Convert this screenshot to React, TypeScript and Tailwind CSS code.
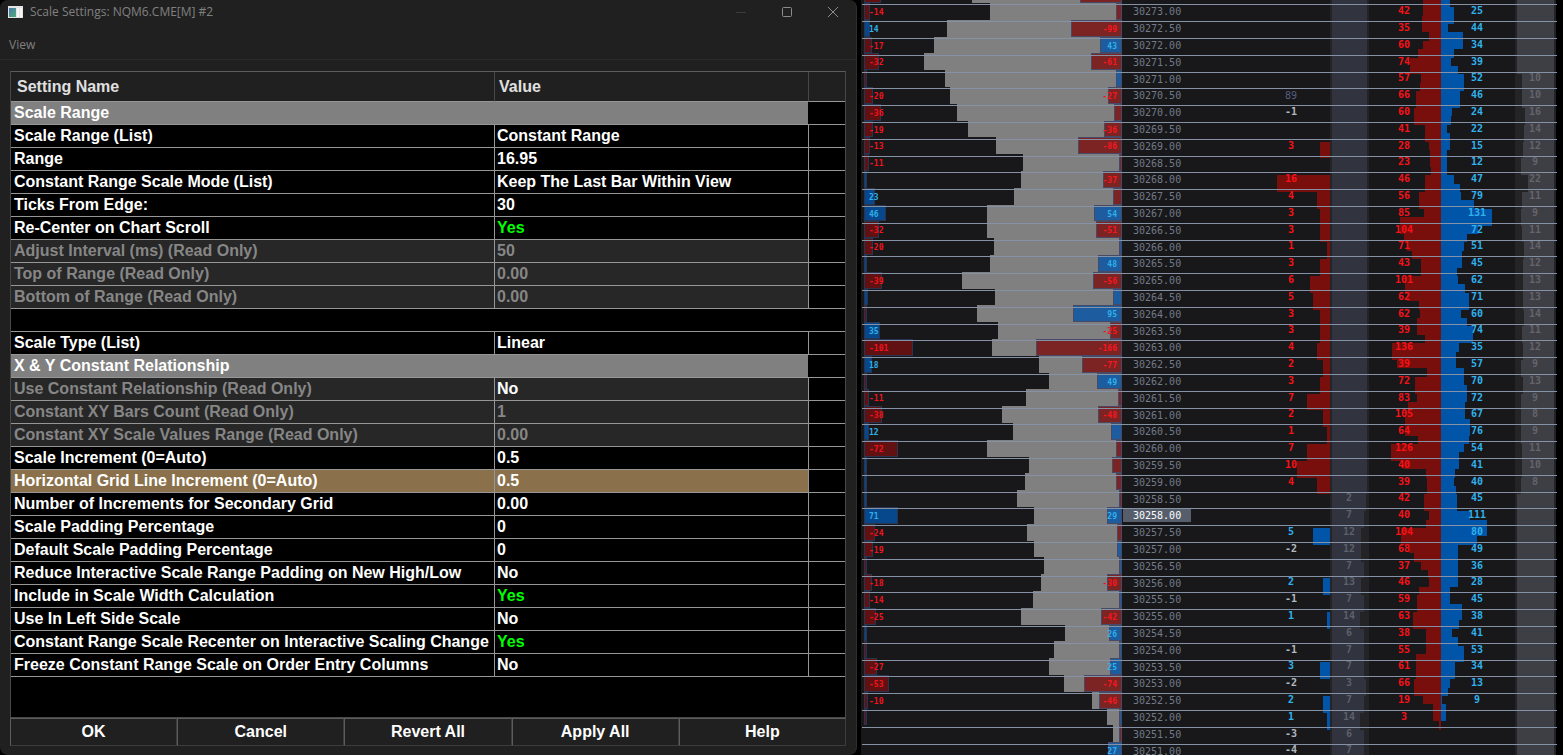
import { Fragment } from "react";

type Setting = {
  name: string;
  value?: string;
  kind?: "group" | "readonly" | "blank" | "selected";
  bright?: boolean;
};

const SETTINGS: Setting[] = [
  { name: "Scale Range", kind: "group" },
  { name: "Scale Range (List)", value: "Constant Range" },
  { name: "Range", value: "16.95" },
  { name: "Constant Range Scale Mode (List)", value: "Keep The Last Bar Within View" },
  { name: "Ticks From Edge:", value: "30" },
  { name: "Re-Center on Chart Scroll", value: "Yes" },
  { name: "Adjust Interval (ms) (Read Only)", value: "50", kind: "readonly" },
  { name: "Top of Range (Read Only)", value: "0.00", kind: "readonly" },
  { name: "Bottom of Range (Read Only)", value: "0.00", kind: "readonly" },
  { name: "", kind: "blank" },
  { name: "Scale Type (List)", value: "Linear" },
  { name: "X & Y Constant Relationship", kind: "group" },
  { name: "Use Constant Relationship (Read Only)", value: "No", kind: "readonly", bright: true },
  { name: "Constant XY Bars Count (Read Only)", value: "1", kind: "readonly" },
  { name: "Constant XY Scale Values Range (Read Only)", value: "0.00", kind: "readonly" },
  { name: "Scale Increment (0=Auto)", value: "0.5" },
  { name: "Horizontal Grid Line Increment (0=Auto)", value: "0.5", kind: "selected" },
  { name: "Number of Increments for Secondary Grid", value: "0.00" },
  { name: "Scale Padding Percentage", value: "0" },
  { name: "Default Scale Padding Percentage", value: "0" },
  { name: "Reduce Interactive Scale Range Padding on New High/Low", value: "No" },
  { name: "Include in Scale Width Calculation", value: "Yes" },
  { name: "Use In Left Side Scale", value: "No" },
  { name: "Constant Range Scale Recenter on Interactive Scaling Change", value: "Yes" },
  { name: "Freeze Constant Range Scale on Order Entry Columns", value: "No" },
];

const BUTTONS = ["OK", "Cancel", "Revert All", "Apply All", "Help"];

const RED = "#780f0c";
const BLUE = "#0055a8";
const RED_TEXT = "#fb1016";
const BLUE_TEXT = "#2fb2ee";

type Side = "R" | "B";
// volume width, delta side / width / label, recent side / width / label
type ProfileRow = [number, Side, number, string, Side, number, string];

// the first row sits just above the view
const PROFILE: ProfileRow[] = [
  [150, "R", 42, "", "R", 17, ""],
  [132, "R", 6, "", "R", 6, "-14"],
  [175, "R", 51, "-99", "B", 6, "14"],
  [188, "B", 22, "43", "R", 8, "-17"],
  [198, "R", 31, "-61", "R", 15, "-32"],
  [177, "B", 6, "", "R", 3, ""],
  [172, "R", 14, "-27", "R", 9, "-20"],
  [165, "R", 8, "", "R", 17, "-36"],
  [154, "R", 18, "-36", "R", 9, "-19"],
  [126, "R", 44, "-86", "R", 6, "-13"],
  [99, "R", 3, "", "R", 5, "-11"],
  [101, "R", 19, "-37", "B", 3, ""],
  [108, "R", 9, "", "B", 11, "23"],
  [135, "B", 28, "54", "B", 22, "46"],
  [135, "R", 26, "-51", "R", 15, "-32"],
  [128, "B", 3, "", "R", 9, "-20"],
  [132, "B", 24, "48", "B", 3, ""],
  [160, "R", 29, "-56", "R", 18, "-39"],
  [127, "B", 9, "", "B", 4, ""],
  [145, "B", 49, "95", "R", 3, ""],
  [124, "R", 12, "-25", "B", 16, "35"],
  [130, "R", 86, "-166", "R", 49, "-101"],
  [83, "R", 40, "-77", "B", 8, "18"],
  [73, "B", 25, "49", "R", 3, ""],
  [96, "R", 4, "", "R", 5, "-11"],
  [120, "R", 24, "-48", "R", 18, "-38"],
  [109, "B", 11, "", "B", 5, "12"],
  [135, "R", 6, "", "R", 34, "-72"],
  [93, "R", 10, "", "B", 3, ""],
  [97, "R", 6, "", "B", 3, ""],
  [105, "R", 3, "", "B", 3, ""],
  [88, "B", 15, "29", "B", 34, "71"],
  [95, "R", 5, "", "R", 11, "-24"],
  [88, "B", 5, "", "R", 9, "-19"],
  [78, "B", 3, "", "R", 3, ""],
  [81, "R", 15, "-30", "R", 8, "-18"],
  [89, "B", 3, "", "R", 6, "-14"],
  [101, "R", 21, "-42", "R", 12, "-25"],
  [57, "B", 13, "26", "B", 3, ""],
  [68, "B", 3, "", "R", 3, ""],
  [73, "B", 12, "25", "R", 13, "-27"],
  [58, "R", 38, "-74", "R", 25, "-53"],
  [30, "R", 23, "-46", "R", 4, "-10"],
  [15, "B", 3, "", "R", 3, ""],
  [9, "R", 3, "", "R", 0, ""],
  [9, "B", 14, "27", "R", 0, ""],
];

// row index -> [label, bar width, side]
const PULLING: Record<number, [string, number, Side]> = {
  8: ["3", 10, "R"], 10: ["16", 53, "R"], 11: ["4", 13, "R"], 12: ["3", 10, "R"],
  13: ["3", 10, "R"], 14: ["1", 3, "R"], 15: ["3", 10, "R"], 16: ["6", 20, "R"],
  17: ["5", 17, "R"], 18: ["3", 10, "R"], 19: ["3", 10, "R"], 20: ["4", 13, "R"],
  21: ["2", 7, "R"], 22: ["3", 10, "R"], 23: ["7", 23, "R"], 24: ["2", 7, "R"],
  25: ["1", 3, "R"], 26: ["7", 23, "R"], 27: ["10", 33, "R"], 28: ["4", 13, "R"],
  31: ["5", 17, "B"], 34: ["2", 7, "B"], 36: ["1", 3, "B"], 39: ["3", 10, "B"],
  41: ["2", 7, "B"], 42: ["1", 3, "B"],
};
const PULLING_NEG: Record<number, string> = {
  6: "-1", 32: "-2", 35: "-1", 38: "-1", 40: "-2", 43: "-3", 44: "-4",
};

const BID = [
  42, 35, 60, 74, 57, 66, 60, 41, 28, 23, 46, 56, 85, 104, 71, 43, 101, 62, 62, 39, 136, 39,
  72, 83, 105, 64, 126, 40, 39, 42, 40, 104, 68, 37, 46, 59, 63, 38, 55, 61, 66, 19, 3,
];
const ASK = [
  25, 44, 34, 39, 52, 46, 24, 22, 15, 12, 47, 79, 131, 72, 51, 45, 62, 71, 60, 74, 35, 57,
  70, 72, 67, 76, 54, 41, 40, 45, 111, 80, 49, 36, 28, 45, 38, 41, 53, 34, 13, 9,
];

// quarter point bars, two per row
const BID_BARS = [
  18, 18, 19, 19, 12, 18, 23, 31, 31, 20, 21, 25, 25, 27, 27, 16, 16, 12, 11, 11, 10, 16, 16,
  22, 22, 17, 41, 41, 37, 34, 29, 20, 20, 36, 36, 34, 22, 21, 24, 24, 16, 49, 49, 44, 14, 26,
  26, 24, 33, 36, 36, 36, 23, 50, 50, 38, 15, 14, 14, 17, 17, 12, 15, 40, 40, 32, 27, 20, 13,
  12, 22, 24, 24, 28, 28, 15, 15, 15, 25, 25, 25, 27, 27, 18, 8, 8, 2,
];
const ASK_BARS = [
  9, 13, 13, 7, 22, 22, 13, 10, 17, 23, 23, 19, 19, 11, 10, 6, 9, 9, 6, 6, 6, 13, 19, 20, 33,
  51, 51, 37, 26, 23, 21, 21, 16, 17, 24, 28, 28, 20, 26, 32, 32, 18, 15, 15, 23, 23, 26, 26,
  24, 24, 29, 29, 28, 23, 18, 18, 14, 13, 15, 16, 16, 29, 46, 46, 36, 17, 17, 17, 17, 17, 9,
  9, 21, 21, 18, 11, 17, 23, 23, 14, 14, 9, 7, 1, 5, 5,
];

const BID_STACK = [2, 7, 12, 12, 7, 13, 7, 14, 6, 7, 7, 3, 7, 14, 6, 7]; // from row 29
const ASK_STACK = [
  10, 10, 16, 14, 12, 9, 22, 11, 9, 11, 14, 12, 13, 13, 14, 11, 12, 9, 13, 9, 8, 9, 11, 10, 8,
]; // from row 4

const ROWS = 45;
const LAST_ROW = 30;
const gridY = (i: number) => Math.ceil(4 + 16.8 * i);
const profileY = (i: number) => Math.floor(3.5 + 16.8 * i);
const bookY = (i: number) => Math.floor(7.7 + 16.8 * i);
const rows = Array.from({ length: ROWS }, (_, i) => i);

function PriceLadder() {
  return (
    <svg
      className="block h-full w-full"
      fontFamily="'DejaVu Sans Mono', 'Liberation Mono', monospace"
      fontSize="10"
      shapeRendering="crispEdges"
      role="img"
      aria-label="NQM6 price ladder"
    >
      <rect width="695" height="100%" fill="#18181a" />

      {/* stack column backgrounds */}
      <rect x="469" width="39" height="100%" fill="#242427" />
      <rect x="471" width="35" height={bookY(29)} fill="#31333f" />
      {BID_STACK.map((v, n) => {
        const y = bookY(29 + n);
        return (
          <rect key={n} x="471" y={y} width={35 - Math.floor(v / 2)} height={bookY(30 + n) - y} fill="#31333f" />
        );
      })}
      <rect x="654" width="41" height="100%" fill="#242427" />
      <rect x="656" width="37" height={bookY(4)} fill="#3e3e45" />
      {ASK_STACK.map((v, n) => {
        const y = bookY(4 + n);
        const cut = Math.floor(v / 2);
        return <rect key={n} x={656 + cut} y={y} width={37 - cut} height={bookY(5 + n) - y} fill="#3e3e45" />;
      })}
      <rect x="656" y={bookY(29)} width="37" height="100%" fill="#3e3e45" />

      {/* volume profile with the delta bars over it */}
      {PROFILE.map(([vol, dSide, delta, , rSide, recent], n) => {
        const y = profileY(n - 1);
        const h = profileY(n) - y;
        return (
          <Fragment key={n}>
            <rect x={261 - vol} y={y} width={vol - 2} height={h} fill="#808080" />
            <rect x={261 - delta} y={y} width={delta} height={h} fill="#464a66" />
            <rect x={262 - delta} y={y + 1} width={delta - 2} height={h - 2} fill={dSide === "R" ? "#7c2424" : "#1c5c9f"} />
            {recent > 0 && (
              <>
                <rect x="3" y={y} width={recent} height={h} fill="#283450" />
                <rect x="4" y={y + 1} width={recent - 2} height={h - 2} fill={rSide === "R" ? "#621113" : "#07488c"} />
              </>
            )}
          </Fragment>
        );
      })}

      {/* pulling and stacking */}
      {rows.map((i) => {
        const bar = PULLING[i];
        if (!bar) return null;
        return (
          <rect key={i} x={469 - bar[1]} y={bookY(i)} width={bar[1]} height={bookY(i + 1) - bookY(i)} fill={bar[2] === "R" ? RED : BLUE} />
        );
      })}

      {/* bid / ask volume */}
      {BID_BARS.map((w, n) => {
        const y = bookY((n - 1) / 2);
        return <rect key={n} x={580 - w} y={y} width={w} height={bookY(n / 2) - y} fill={RED} />;
      })}
      {ASK_BARS.map((w, n) => {
        const y = bookY((n - 1) / 2);
        return <rect key={n} x="580" y={y} width={w} height={bookY(n / 2) - y} fill={BLUE} />;
      })}

      {rows.map((i) => (
        <rect key={i} x="1" y={gridY(i)} width="695" height="1" fill="#8591a5" />
      ))}

      <rect x="262" y={gridY(LAST_ROW) + 1} width="68" height="13" fill="#565e6c" />
      {rows.map((i) => (
        <text key={i} x="272" y={gridY(i) + 11} fill={i === LAST_ROW ? "#ffffff" : "#737a88"}>
          {(30273 - i * 0.5).toFixed(2)}
        </text>
      ))}

      <g fontSize="8" fontWeight="bold">
        {PROFILE.map(([, dSide, , dLabel, rSide, , rLabel], n) => {
          const y = profileY(n - 1) + 12;
          return (
            <Fragment key={n}>
              <text x="256" y={y} textAnchor="end" fill={dSide === "R" ? "#f8161c" : "#2fb0ea"}>
                {dLabel}
              </text>
              <text x="8" y={y} fill={rSide === "R" ? "#f4121a" : "#2fb0ea"}>
                {rLabel}
              </text>
            </Fragment>
          );
        })}
      </g>

      <g fontWeight="bold" textAnchor="middle">
        <text x="430" y={bookY(5) + 8} fill="#565e7c" fontWeight="normal">
          89
        </text>
        {rows.map((i) => {
          const y = bookY(i) + 7;
          return (
            <Fragment key={i}>
              {PULLING[i] && (
                <text x="430" y={y} fill={PULLING[i][2] === "R" ? RED_TEXT : BLUE_TEXT}>
                  {PULLING[i][0]}
                </text>
              )}
              {PULLING_NEG[i] && (
                <text x="430" y={y} fill="#b4b8c0">
                  {PULLING_NEG[i]}
                </text>
              )}
              {i >= 29 && (
                <text x="488" y={y} fill="#5e606a">
                  {BID_STACK[i - 29]}
                </text>
              )}
              <text x="543" y={y} fill={RED_TEXT}>
                {BID[i]}
              </text>
              <text x="616" y={y} fill={BLUE_TEXT}>
                {ASK[i]}
              </text>
              <text x="674" y={y} fill="#64646c">
                {ASK_STACK[i - 4]}
              </text>
            </Fragment>
          );
        })}
      </g>
    </svg>
  );
}

function SettingRow({ name, value, kind, bright }: Setting) {
  if (kind === "blank") {
    return (
      <tr className="h-[23px]">
        <td colSpan={3} className="border-b border-[#969696] p-0" />
      </tr>
    );
  }
  if (kind === "group") {
    return (
      <tr className="h-[23px]">
        <td colSpan={2} className="border-b border-[#969696] bg-[#808080] p-0 pl-[3px]">
          {name}
        </td>
        <td className="border-b border-[#969696] p-0" />
      </tr>
    );
  }
  const bg = kind === "readonly" ? "bg-[#272727]" : kind === "selected" ? "bg-[#8a714b]" : "bg-black";
  const nameColor = kind === "readonly" ? "text-[#868686]" : "text-white";
  const valueColor = value === "Yes" ? "text-[#00ff00]" : bright ? "text-white" : nameColor;
  return (
    <tr className="h-[23px]">
      <td className={`border-b border-[#969696] p-0 pl-[3px] ${bg} ${nameColor}`}>{name}</td>
      <td className={`border-b border-l border-[#969696] p-0 pl-[2px] ${bg} ${valueColor}`}>{value}</td>
      <td className="border-b border-l border-[#969696] p-0" />
    </tr>
  );
}

function ScaleSettings() {
  return (
    <section className="flex min-w-0 flex-1 flex-col rounded-lg border-r border-[#2e2e2e] bg-[#202020] font-['Liberation_Sans',Arial,sans-serif]">
      <header className="flex h-6 items-center pl-2 font-['Open_Sans','Noto_Sans',sans-serif] text-xs text-[#808080]">
        <svg className="mr-[7px] h-3 w-[15px]" viewBox="0 0 15 12" aria-hidden="true">
          <defs>
            <linearGradient id="app-icon" x1="0" y1="0" x2="1" y2="1">
              <stop offset="0" stopColor="#4a78b0" />
              <stop offset="1" stopColor="#4fae74" />
            </linearGradient>
          </defs>
          <rect width="15" height="12" fill="#e4e4e8" />
          <rect x="1" y="2" width="7" height="9" fill="url(#app-icon)" />
          <rect x="9" y="2" width="2" height="9" fill="#f6f6f6" />
          <rect x="12" y="2" width="2" height="9" fill="#f6f6f6" />
        </svg>
        <h1 className="flex-1 truncate">Scale Settings: NQM6.CME[M] #2</h1>
        <button aria-label="Minimize" className="flex w-[46px] justify-center">
          <svg width="12" height="12" stroke="#3c3c3c" fill="none">
            <path d="M1 6.5h10" />
          </svg>
        </button>
        <button aria-label="Maximize" className="flex w-[46px] justify-center">
          <svg width="12" height="12" stroke="#8c8c8c" fill="none">
            <rect x="1.5" y="1.5" width="9" height="9" rx="1" />
          </svg>
        </button>
        <button aria-label="Close" className="flex w-[46px] justify-center">
          <svg width="12" height="12" stroke="#8c8c8c" fill="none">
            <path d="M1 1l10 10M11 1L1 11" />
          </svg>
        </button>
      </header>
      <nav className="flex h-9 items-center border-b border-[#2a2a2a] pl-[9px] pt-1.5 font-['Open_Sans','Noto_Sans',sans-serif] text-xs text-[#808080]">
        <button>View</button>
      </nav>

      <div className="mx-[10px] mt-[11px] flex-1 border border-b-0 border-[#484848] border-t-[#5c5c5c] bg-black">
        <table className="w-full table-fixed border-separate border-spacing-0 text-left text-base leading-[22px] font-bold text-white">
          <colgroup>
            <col className="w-[483px]" />
            <col />
            <col className="w-[37px]" />
          </colgroup>
          <thead className="bg-[#202020] text-[#e0e0e0]">
            <tr className="h-[30px]">
              <th className="border-b border-[#969696] p-0 pl-[6px]">Setting Name</th>
              <th className="border-b border-l border-b-[#969696] border-l-[#484848] p-0 pl-1">Value</th>
              <th aria-label="Spacer" className="border-b border-l border-b-[#969696] border-l-[#484848] p-0" />
            </tr>
          </thead>
          <tbody>
            {SETTINGS.map((s, i) => (
              <SettingRow key={i} {...s} />
            ))}
          </tbody>
        </table>
      </div>

      <footer className="mx-[10px] mb-[9px] grid grid-cols-5 border-t border-[#484848]">
        {BUTTONS.map((label) => (
          <button
            key={label}
            className="h-7 border border-t-[#5c5c5c] border-r-[#3c3c3c] border-b-[#3c3c3c] border-l-[#5c5c5c] text-base leading-[22px] font-bold text-white"
          >
            {label}
          </button>
        ))}
      </footer>
    </section>
  );
}

export default function App() {
  return (
    <main className="flex h-screen gap-1 overflow-hidden bg-black">
      <ScaleSettings />
      <div className="w-[702px] shrink-0">
        <PriceLadder />
      </div>
    </main>
  );
}
